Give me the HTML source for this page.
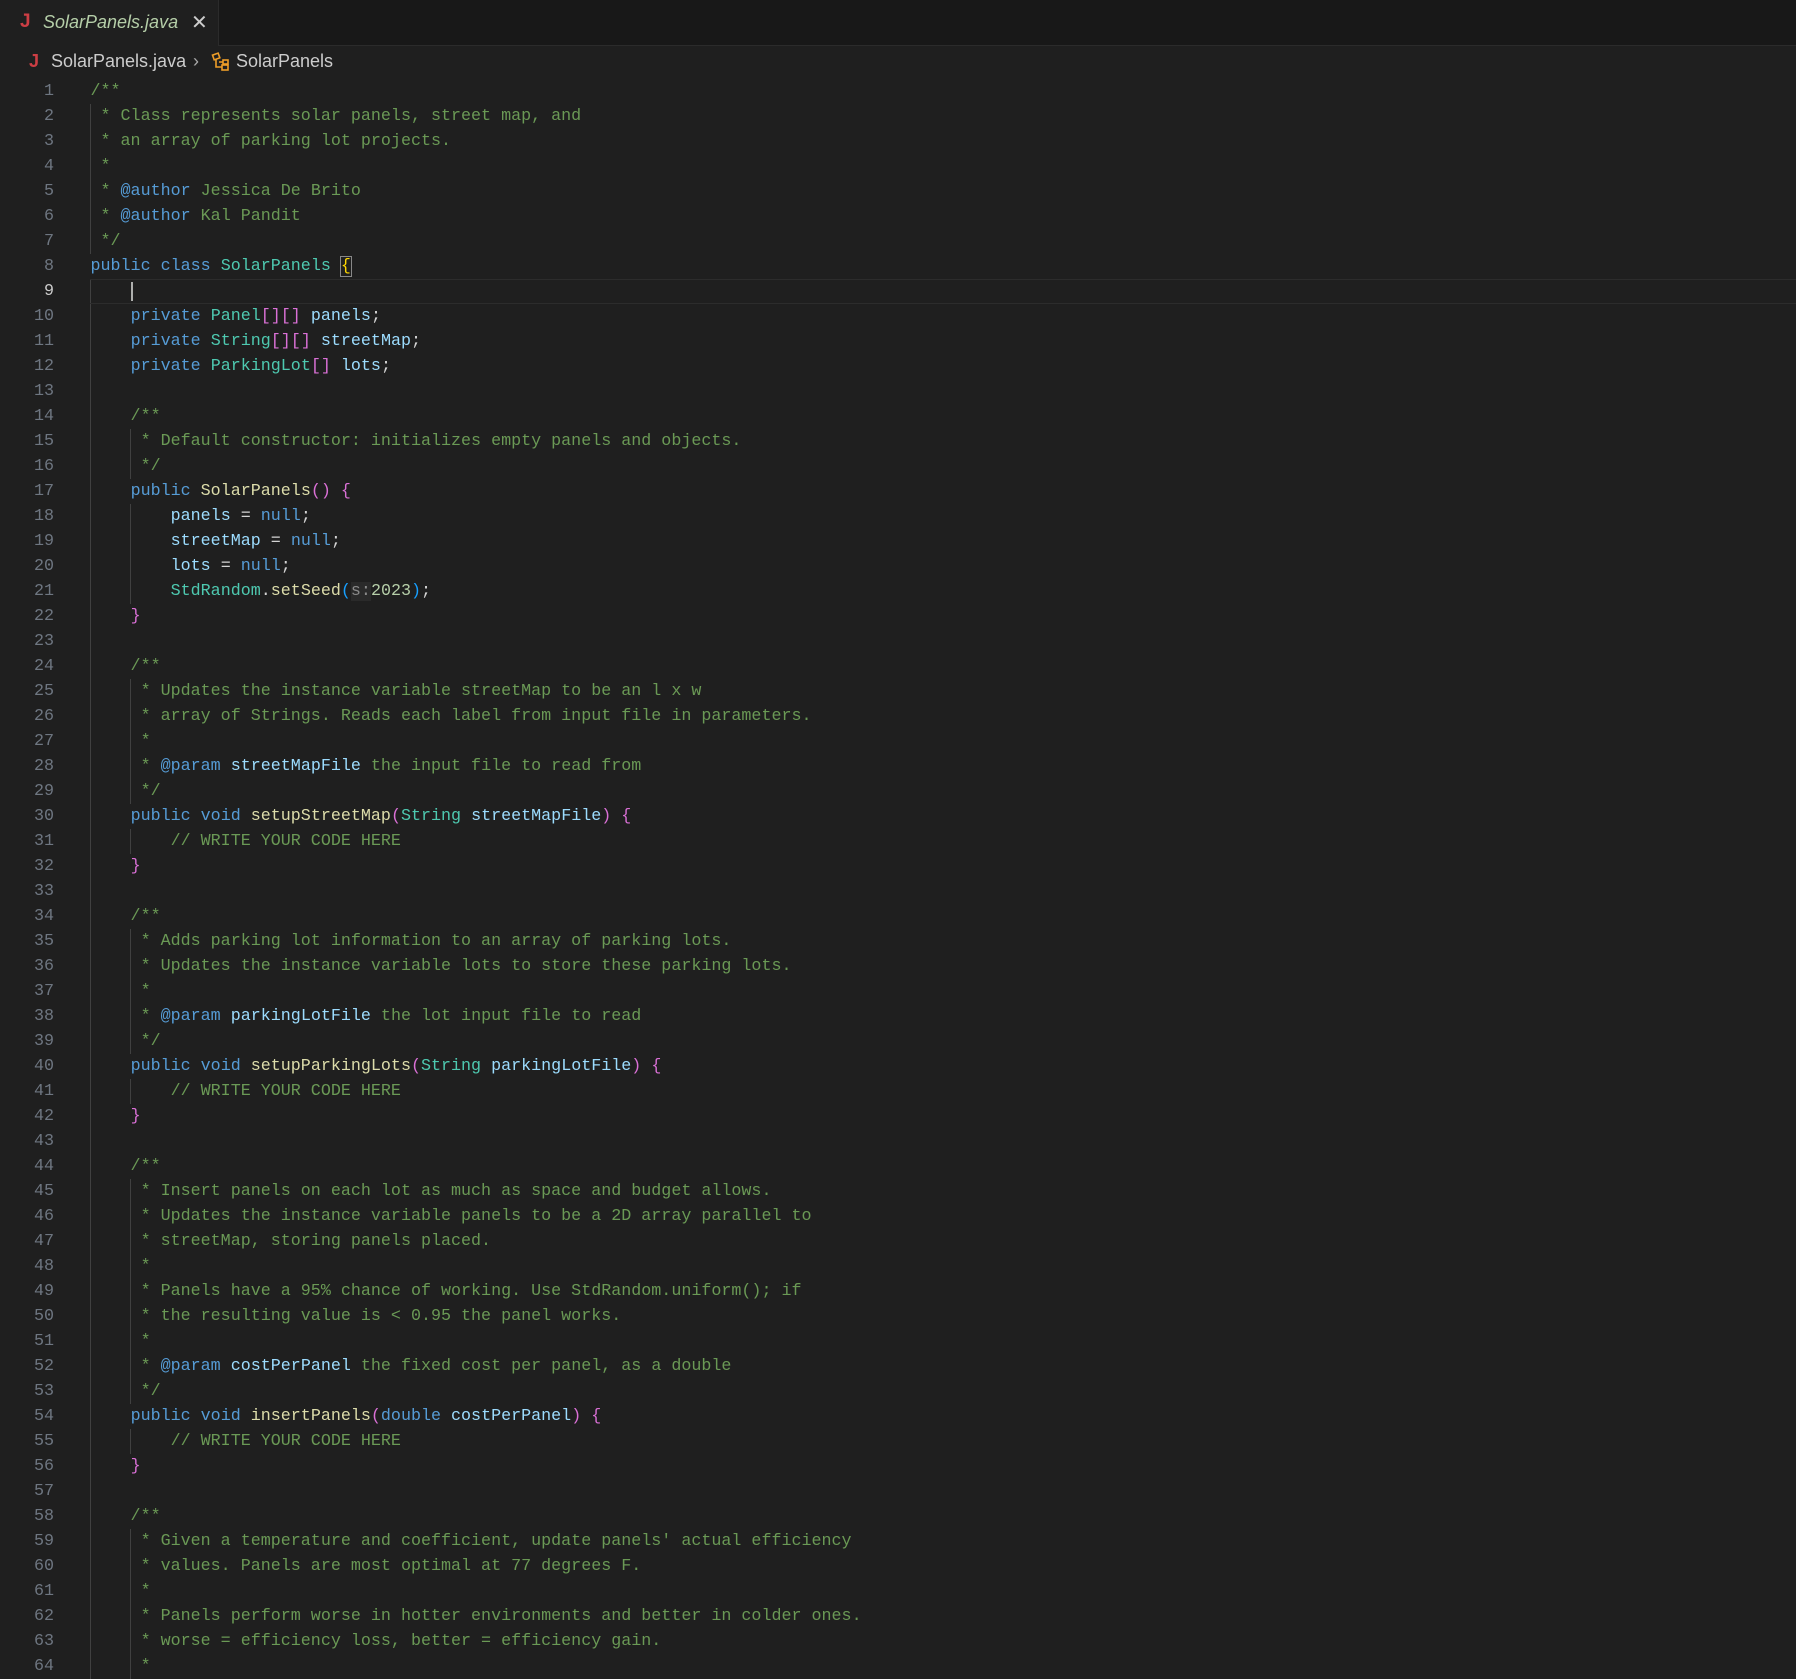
<!DOCTYPE html>
<html><head><meta charset="utf-8"><style>
html,body{margin:0;padding:0;background:#1f1f1f;width:1796px;height:1658px;overflow:hidden}
.tabs{position:absolute;left:0;top:0;width:1796px;height:45px;background:#181818;border-bottom:1px solid #2b2b2b}
.tab{position:absolute;left:0;top:0;width:218px;height:46px;background:#1f1f1f;border-right:1px solid #2b2b2b;font:italic 18px "Liberation Sans",sans-serif;color:#fff}
.tab .j{position:absolute;left:20px;top:11px;color:#cc3e44;font:bold 19px "Liberation Sans",sans-serif;font-style:normal}
.tab .n{position:absolute;left:43px;top:12px}
.tab .x{position:absolute;left:191px;top:10px;font-style:normal;font-size:20px;color:#ccc}
.bc{position:absolute;top:51px;left:0;height:24px;font:18px "Liberation Sans",sans-serif;color:#cccccc}
.bc .j{position:absolute;left:29px;top:0;color:#cc3e44;font-weight:bold}
.code{position:absolute;left:0;top:79px;width:1796px}
.l{position:relative;height:25px;line-height:25px;white-space:pre;font:16.7px/25px "Liberation Mono",monospace;color:#d4d4d4}
.ln{position:absolute;left:0;width:54px;text-align:right;color:#6e7681}
.tx{position:absolute;left:90.5px}
.g0::before,.g1::before,.g1::after{content:"";position:absolute;top:0;height:25px;width:1px;background:#404040}
.g0::before,.g1::before{left:90px}
.g1::after{left:130px}
.cur{border-top:1px solid #2c2c2c;border-bottom:1px solid #2c2c2c;box-sizing:border-box}
.k{color:#569cd6}.t{color:#4ec9b0}.v{color:#9cdcfe}.f{color:#dcdcaa}.c{color:#6a9955}.p{color:#da70d6}.y{color:#ffd700;outline:1px solid #888;}.n{color:#b5cea8}.b{color:#179fff}.h{color:#8a8a8a;background:#2a2a2a}
</style></head><body>
<div class="tabs"><div class="tab"><span class="j">J</span><span class="n">SolarPanels.java</span><span class="x">✕</span></div></div>
<div class="bc"><span class="j">J</span><span style="position:absolute;left:51px">SolarPanels.java</span><span style="position:absolute;left:193px;color:#aaa">›</span>
<svg style="position:absolute;left:211px;top:1px" width="20" height="20" viewBox="0 0 20 20" fill="none" stroke="#ee9d28" stroke-width="1.6"><rect x="2" y="2" width="6" height="5" transform="rotate(-20 5 4)"/><path d="M5 7v8h6M8 10h4"/><rect x="12" y="8" width="5" height="4"/><rect x="11" y="13" width="6" height="5"/></svg>
<span style="position:absolute;left:236px">SolarPanels</span></div>
<div class="code">
<div class="l"><span class="ln">1</span><span class="tx c">/**</span></div>
<div class="l g0"><span class="ln">2</span><span class="tx c"> * Class represents solar panels, street map, and</span></div>
<div class="l g0"><span class="ln">3</span><span class="tx c"> * an array of parking lot projects.</span></div>
<div class="l g0"><span class="ln">4</span><span class="tx c"> *</span></div>
<div class="l g0"><span class="ln">5</span><span class="tx c"> * <span class="k">@author</span> Jessica De Brito</span></div>
<div class="l g0"><span class="ln">6</span><span class="tx c"> * <span class="k">@author</span> Kal Pandit</span></div>
<div class="l g0"><span class="ln">7</span><span class="tx c"> */</span></div>
<div class="l"><span class="ln">8</span><span class="tx"><span class="k">public class</span> <span class="t">SolarPanels</span> <span class="y">{</span></span></div>
<div class="l g0"><div class="cur" style="position:absolute;left:90px;right:0;top:0;height:25px"></div><span class="ln" style="color:#ccc">9</span><span class="tx">    <span style="border-left:2px solid #aeafad"> </span></span></div>
<div class="l g0"><span class="ln">10</span><span class="tx">    <span class="k">private</span> <span class="t">Panel</span><span class="p">[][]</span> <span class="v">panels</span>;</span></div>
<div class="l g0"><span class="ln">11</span><span class="tx">    <span class="k">private</span> <span class="t">String</span><span class="p">[][]</span> <span class="v">streetMap</span>;</span></div>
<div class="l g0"><span class="ln">12</span><span class="tx">    <span class="k">private</span> <span class="t">ParkingLot</span><span class="p">[]</span> <span class="v">lots</span>;</span></div>
<div class="l g0"><span class="ln">13</span></div>
<div class="l g0"><span class="ln">14</span><span class="tx c">    /**</span></div>
<div class="l g1"><span class="ln">15</span><span class="tx c">     * Default constructor: initializes empty panels and objects.</span></div>
<div class="l g1"><span class="ln">16</span><span class="tx c">     */</span></div>
<div class="l g0"><span class="ln">17</span><span class="tx">    <span class="k">public</span> <span class="f">SolarPanels</span><span class="p">()</span> <span class="p">{</span></span></div>
<div class="l g1"><span class="ln">18</span><span class="tx">        <span class="v">panels</span> = <span class="k">null</span>;</span></div>
<div class="l g1"><span class="ln">19</span><span class="tx">        <span class="v">streetMap</span> = <span class="k">null</span>;</span></div>
<div class="l g1"><span class="ln">20</span><span class="tx">        <span class="v">lots</span> = <span class="k">null</span>;</span></div>
<div class="l g1"><span class="ln">21</span><span class="tx">        <span class="t">StdRandom</span>.<span class="f">setSeed</span><span class="b">(</span><span class="h">s:</span><span class="n">2023</span><span class="b">)</span>;</span></div>
<div class="l g0"><span class="ln">22</span><span class="tx">    <span class="p">}</span></span></div>
<div class="l g0"><span class="ln">23</span></div>
<div class="l g0"><span class="ln">24</span><span class="tx c">    /**</span></div>
<div class="l g1"><span class="ln">25</span><span class="tx c">     * Updates the instance variable streetMap to be an l x w</span></div>
<div class="l g1"><span class="ln">26</span><span class="tx c">     * array of Strings. Reads each label from input file in parameters.</span></div>
<div class="l g1"><span class="ln">27</span><span class="tx c">     *</span></div>
<div class="l g1"><span class="ln">28</span><span class="tx c">     * <span class="k">@param</span> <span class="v">streetMapFile</span> the input file to read from</span></div>
<div class="l g1"><span class="ln">29</span><span class="tx c">     */</span></div>
<div class="l g0"><span class="ln">30</span><span class="tx">    <span class="k">public void</span> <span class="f">setupStreetMap</span><span class="p">(</span><span class="t">String</span> <span class="v">streetMapFile</span><span class="p">)</span> <span class="p">{</span></span></div>
<div class="l g1"><span class="ln">31</span><span class="tx c">        // WRITE YOUR CODE HERE</span></div>
<div class="l g0"><span class="ln">32</span><span class="tx">    <span class="p">}</span></span></div>
<div class="l g0"><span class="ln">33</span></div>
<div class="l g0"><span class="ln">34</span><span class="tx c">    /**</span></div>
<div class="l g1"><span class="ln">35</span><span class="tx c">     * Adds parking lot information to an array of parking lots.</span></div>
<div class="l g1"><span class="ln">36</span><span class="tx c">     * Updates the instance variable lots to store these parking lots.</span></div>
<div class="l g1"><span class="ln">37</span><span class="tx c">     *</span></div>
<div class="l g1"><span class="ln">38</span><span class="tx c">     * <span class="k">@param</span> <span class="v">parkingLotFile</span> the lot input file to read</span></div>
<div class="l g1"><span class="ln">39</span><span class="tx c">     */</span></div>
<div class="l g0"><span class="ln">40</span><span class="tx">    <span class="k">public void</span> <span class="f">setupParkingLots</span><span class="p">(</span><span class="t">String</span> <span class="v">parkingLotFile</span><span class="p">)</span> <span class="p">{</span></span></div>
<div class="l g1"><span class="ln">41</span><span class="tx c">        // WRITE YOUR CODE HERE</span></div>
<div class="l g0"><span class="ln">42</span><span class="tx">    <span class="p">}</span></span></div>
<div class="l g0"><span class="ln">43</span></div>
<div class="l g0"><span class="ln">44</span><span class="tx c">    /**</span></div>
<div class="l g1"><span class="ln">45</span><span class="tx c">     * Insert panels on each lot as much as space and budget allows.</span></div>
<div class="l g1"><span class="ln">46</span><span class="tx c">     * Updates the instance variable panels to be a 2D array parallel to</span></div>
<div class="l g1"><span class="ln">47</span><span class="tx c">     * streetMap, storing panels placed.</span></div>
<div class="l g1"><span class="ln">48</span><span class="tx c">     *</span></div>
<div class="l g1"><span class="ln">49</span><span class="tx c">     * Panels have a 95% chance of working. Use StdRandom.uniform(); if</span></div>
<div class="l g1"><span class="ln">50</span><span class="tx c">     * the resulting value is &lt; 0.95 the panel works.</span></div>
<div class="l g1"><span class="ln">51</span><span class="tx c">     *</span></div>
<div class="l g1"><span class="ln">52</span><span class="tx c">     * <span class="k">@param</span> <span class="v">costPerPanel</span> the fixed cost per panel, as a double</span></div>
<div class="l g1"><span class="ln">53</span><span class="tx c">     */</span></div>
<div class="l g0"><span class="ln">54</span><span class="tx">    <span class="k">public void</span> <span class="f">insertPanels</span><span class="p">(</span><span class="k">double</span> <span class="v">costPerPanel</span><span class="p">)</span> <span class="p">{</span></span></div>
<div class="l g1"><span class="ln">55</span><span class="tx c">        // WRITE YOUR CODE HERE</span></div>
<div class="l g0"><span class="ln">56</span><span class="tx">    <span class="p">}</span></span></div>
<div class="l g0"><span class="ln">57</span></div>
<div class="l g0"><span class="ln">58</span><span class="tx c">    /**</span></div>
<div class="l g1"><span class="ln">59</span><span class="tx c">     * Given a temperature and coefficient, update panels' actual efficiency</span></div>
<div class="l g1"><span class="ln">60</span><span class="tx c">     * values. Panels are most optimal at 77 degrees F.</span></div>
<div class="l g1"><span class="ln">61</span><span class="tx c">     *</span></div>
<div class="l g1"><span class="ln">62</span><span class="tx c">     * Panels perform worse in hotter environments and better in colder ones.</span></div>
<div class="l g1"><span class="ln">63</span><span class="tx c">     * worse = efficiency loss, better = efficiency gain.</span></div>
<div class="l g1"><span class="ln">64</span><span class="tx c">     *</span></div>
</div>
</body></html>
